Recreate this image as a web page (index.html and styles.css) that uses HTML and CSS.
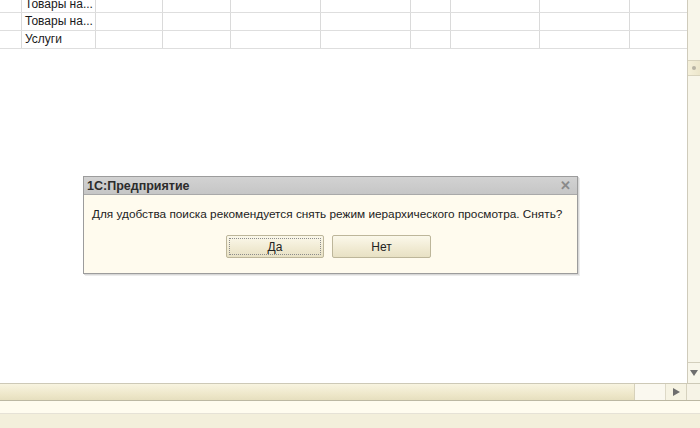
FILE: index.html
```html
<!doctype html>
<html>
  <head>
    <meta charset="utf-8">
    <title>1С:Предприятие</title>
    <link rel="stylesheet" href="styles.css">
  </head>
  <body>
    <div id="workspace">
      <div id="list-area">
        <div class="grid">
          <div class="row">
            <div class="cell"></div><div class="cell">Товары на...</div><div class="cell"></div><div class="cell"></div><div class="cell"></div>
            <div class="cell"></div><div class="cell"></div><div class="cell"></div><div class="cell"></div><div class="cell last"></div>
          </div>
          <div class="row">
            <div class="cell"></div><div class="cell">Товары на...</div><div class="cell"></div><div class="cell"></div><div class="cell"></div>
            <div class="cell"></div><div class="cell"></div><div class="cell"></div><div class="cell"></div><div class="cell last"></div>
          </div>
          <div class="row">
            <div class="cell"></div><div class="cell">Услуги</div><div class="cell"></div><div class="cell"></div><div class="cell"></div>
            <div class="cell"></div><div class="cell"></div><div class="cell"></div><div class="cell"></div><div class="cell last"></div>
          </div>
        </div>
      </div>

      <div id="vscroll">
        <div class="vtrack-top"></div>
        <div class="vthumb"><span class="grip"></span></div>
        <div class="vtrack"></div>
        <div class="vbutton"><span class="arrow-down"></span></div>
      </div>
    </div>

    <div id="hscroll">
      <div class="hthumb"></div>
      <div class="htrack"></div>
      <div class="hbutton"><span class="arrow-right"></span></div>
      <div class="corner"></div>
    </div>

    <div id="strip"></div>
    <div id="status"></div>

    <!-- modal question over the list -->
    <div id="question">
      <div class="q-title">
        <span>1С:Предприятие</span>
        <span class="q-close">&#x2715;</span>
      </div>
      <div class="q-body">
        <p class="q-text">Для удобства поиска рекомендуется снять режим иерархического просмотра. Снять?</p>
        <div class="q-buttons">
          <button class="q-btn focused"><span>Да</span></button>
          <button class="q-btn wide"><span>Нет</span></button>
        </div>
      </div>
    </div>
  </body>
</html>
```

FILE: styles.css
```css
* {
  box-sizing: border-box;
}

html, body {
  margin: 0;
  height: 100%;
  background: #fff;
  font-family: 'Liberation Sans', Arial, sans-serif;
  font-size: 12px;
  color: #1a1a1a;
  overflow: hidden;
}

body {
  display: flex;
  flex-direction: column;
  position: relative;
}

#workspace {
  display: flex;
  height: 383px;
  flex: 0 0 auto;
}

#list-area {
  flex: 1 1 auto;
  overflow: hidden;
}

.grid {
  margin-top: -4px;
}

.row {
  display: grid;
  grid-template-columns: 22px 74px 67px 68px 90px 90px 40px 89px 90px 1fr;
  height: 18px;
  border-bottom: 1px solid #dedede;
}

.grid .row:first-child {
  height: 17px;
}

.cell {
  border-right: 1px solid #dadada;
  padding: 0 0 0 3px;
  line-height: 17px;
  white-space: nowrap;
  overflow: hidden;
}

.cell.last {
  border-right: none;
}

/* vertical scroll bar */
#vscroll {
  width: 13px;
  flex: 0 0 auto;
  display: flex;
  flex-direction: column;
  border-left: 1px solid #cfcbbb;
  background: #f8f6ea;
}

.vtrack-top {
  height: 60px;
}

.vthumb {
  height: 16px;
  border-top: 1px solid #d8d3bd;
  border-bottom: 1px solid #d8d3bd;
  background: linear-gradient(to right, #f5f0da, #ece6cb);
  display: flex;
  align-items: center;
  justify-content: center;
}

.grip {
  width: 4px;
  height: 4px;
  border-radius: 2px;
  background: #b7b3a3;
}

.vtrack {
  flex: 1 1 auto;
}

.vbutton {
  height: 21px;
  border-top: 1px solid #d3cfbd;
  display: flex;
  align-items: center;
  justify-content: center;
}

.arrow-down {
  width: 0;
  height: 0;
  border-left: 4px solid transparent;
  border-right: 4px solid transparent;
  border-top: 6px solid #6e6e6e;
}

/* horizontal scroll bar */
#hscroll {
  height: 18px;
  flex: 0 0 auto;
  display: flex;
  border-top: 1px solid #cdc9b7;
  border-bottom: 1px solid #bcb8a3;
}

.hthumb {
  width: 635px;
  background: linear-gradient(to bottom, #f8f4e0, #ede6c8 70%, #e6dfbf);
  border-right: 1px solid #d6d1bb;
}

.htrack {
  width: 31px;
  background: #faf8ef;
  border-right: 1px solid #ddd9c7;
}

.hbutton {
  width: 21px;
  background: #f6f3e3;
  border-right: 1px solid #d6d2bf;
  display: flex;
  align-items: center;
  justify-content: center;
}

.arrow-right {
  width: 0;
  height: 0;
  border-top: 4px solid transparent;
  border-bottom: 4px solid transparent;
  border-left: 7px solid #6e6e6e;
}

.corner {
  flex: 1 1 auto;
  background: #f6f3e6;
}

#strip {
  height: 13px;
  flex: 0 0 auto;
  background: #fffcef;
  border-bottom: 1px solid #e6e2d6;
}

#status {
  flex: 1 1 auto;
  background: #f3efdb;
}

/* question dialog */
#question {
  position: absolute;
  left: 83px;
  top: 176px;
  width: 495px;
  height: 98px;
  border: 1px solid #9c9c9c;
  background: #fffbee;
  box-shadow: 1px 1px 0 #d8d8d8, 2px 2px 0 #ececec;
  display: flex;
  flex-direction: column;
}

.q-title {
  height: 18px;
  flex: 0 0 auto;
  display: flex;
  align-items: center;
  justify-content: space-between;
  padding: 0 6px 0 3px;
  background: linear-gradient(to bottom, #d2d2d2, #c6c6c6);
  border-bottom: 1px solid #a9a9a9;
  font-weight: bold;
  font-size: 12.5px;
  color: #2c2c2c;
}

.q-close {
  color: #8a8a8a;
  font-size: 13px;
  font-weight: bold;
}

.q-body {
  flex: 1 1 auto;
  padding: 12px 8px 0;
}

.q-text {
  margin: 0;
  line-height: 15px;
  font-size: 11.8px;
  white-space: nowrap;
  color: #222;
}

.q-buttons {
  display: flex;
  justify-content: center;
  gap: 8px;
  margin-top: 13px;
  padding-right: 4px;
}

.q-btn {
  width: 98px;
  height: 23px;
  padding: 2px;
  border: 1px solid #bdb69a;
  border-radius: 2px;
  background: linear-gradient(to bottom, #fbf8ea, #f0ead2 60%, #e8e1c4);
  font: inherit;
  color: #222;
}

.q-btn.wide {
  width: 99px;
}

.q-btn span {
  display: flex;
  align-items: center;
  justify-content: center;
  height: 100%;
  border: 1px dotted transparent;
}

.q-btn.focused span {
  border-color: #8c8c8c;
}
```
